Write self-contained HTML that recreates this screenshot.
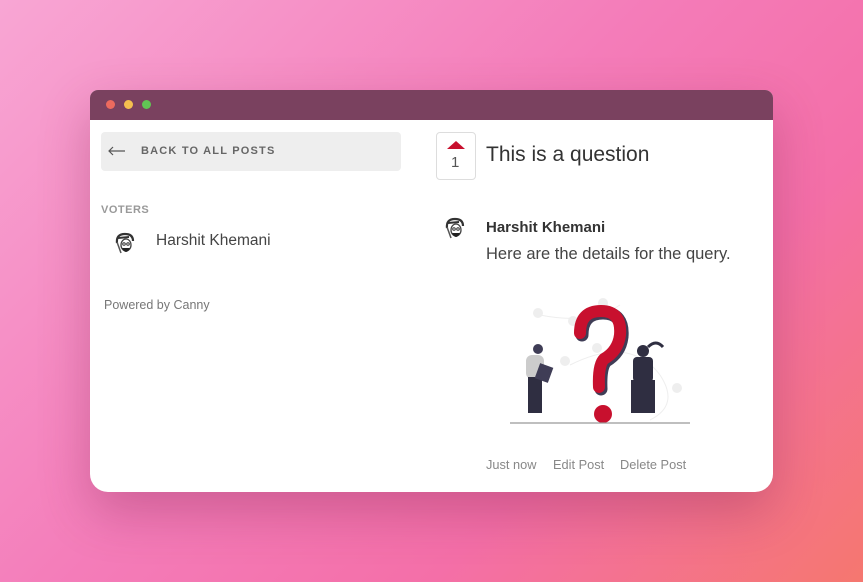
<!DOCTYPE html>
<html><head><style>
body{margin:0;width:863px;height:582px;overflow:hidden;font-family:"Liberation Sans",sans-serif;
background:linear-gradient(135deg,#f8a6d4 0%,#f47cb9 45%,#f46fa8 70%,#f5776f 100%);position:relative}
.win{position:absolute;left:90px;top:90px;width:683px;height:402px;background:#fff;border-radius:8px 8px 18px 18px;overflow:hidden;box-shadow:0 20px 50px rgba(120,30,70,.3)}
.bar{height:30px;background:#7a415f;position:relative}
.dot{position:absolute;top:10px;width:9px;height:9px;border-radius:50%}
.t{position:absolute;white-space:nowrap}
.av{position:absolute;width:22px;height:24px}
</style></head><body>
<div class="win">
<div class="bar"><div class="dot" style="left:16px;background:#ec6a5e"></div><div class="dot" style="left:34px;background:#f4bf4f"></div><div class="dot" style="left:52px;background:#61c554"></div></div>
<div style="position:absolute;left:11px;top:42px;width:300px;height:39px;background:#eee;border-radius:4px"></div>
<svg style="position:absolute;left:18px;top:56px" width="18" height="10" viewBox="0 0 18 10"><path d="M17 5 H1 M5 1 L1 5 L5 9" stroke="#555" stroke-width="1.2" fill="none"/></svg>
<div class="t" style="left:51px;top:55px;font-size:11px;font-weight:bold;letter-spacing:1.2px;color:#666">BACK TO ALL POSTS</div>
<div class="t" style="left:11px;top:114px;font-size:11px;font-weight:bold;color:#999;letter-spacing:.5px">VOTERS</div>
<svg class="av" style="left:24px;top:142px" viewBox="0 0 22 24"><path d="M3 11 Q2 2 11 2 Q19 2 19 9" stroke="#333" stroke-width="2.2" fill="none"/><path d="M4 6 L15 5" stroke="#333" stroke-width="2"/><ellipse cx="12" cy="13" rx="5" ry="6" fill="#fff" stroke="#444" stroke-width="1.3"/><circle cx="10" cy="12" r="1.3" fill="none" stroke="#333"/><circle cx="14" cy="12" r="1.3" fill="none" stroke="#333"/><path d="M8 16 Q12 24 16 16 Z" fill="#222"/><path d="M3 10 L7 21" stroke="#555" stroke-width="1.5"/></svg>
<div class="t" style="left:66px;top:142px;font-size:15.5px;color:#444">Harshit Khemani</div>
<div class="t" style="left:14px;top:208px;font-size:12.5px;color:#777">Powered by Canny</div>
<div style="position:absolute;left:346px;top:42px;width:38px;height:46px;border:1px solid #ddd;border-radius:4px"></div>
<div style="position:absolute;left:357px;top:51px;width:0;height:0;border-left:9px solid transparent;border-right:9px solid transparent;border-bottom:8px solid #c8102e"></div>
<div class="t" style="left:361px;top:64px;font-size:15px;color:#555">1</div>
<div class="t" style="left:396px;top:53px;font-size:21px;color:#333">This is a question</div>
<svg class="av" style="left:354px;top:127px" viewBox="0 0 22 24"><path d="M3 11 Q2 2 11 2 Q19 2 19 9" stroke="#333" stroke-width="2.2" fill="none"/><path d="M4 6 L15 5" stroke="#333" stroke-width="2"/><ellipse cx="12" cy="13" rx="5" ry="6" fill="#fff" stroke="#444" stroke-width="1.3"/><circle cx="10" cy="12" r="1.3" fill="none" stroke="#333"/><circle cx="14" cy="12" r="1.3" fill="none" stroke="#333"/><path d="M8 16 Q12 24 16 16 Z" fill="#222"/><path d="M3 10 L7 21" stroke="#555" stroke-width="1.5"/></svg>
<div class="t" style="left:396px;top:129px;font-size:15px;font-weight:bold;color:#333">Harshit Khemani</div>
<div class="t" style="left:396px;top:155px;font-size:16.5px;color:#444">Here are the details for the query.</div>
<svg style="position:absolute;left:420px;top:205px" width="185" height="130" viewBox="0 0 185 130">
<path d="M30 20 Q80 30 110 10 M60 70 Q120 40 150 80 Q170 110 140 125" stroke="#eee" fill="none"/>
<circle cx="28" cy="18" r="5" fill="#eee"/><circle cx="93" cy="8" r="5" fill="#eee"/><circle cx="63" cy="26" r="5" fill="#eee"/><circle cx="55" cy="66" r="5" fill="#eee"/><circle cx="87" cy="53" r="5" fill="#eee"/><circle cx="167" cy="93" r="5" fill="#eee"/>
<path d="M72 40 Q72 18 93 18 Q114 18 112 42 Q110 58 96 66 Q90 72 91 94" stroke="#3f3d56" stroke-width="13" fill="none" stroke-linecap="round"/>
<path d="M70 38 Q70 16 91 16 Q112 16 110 40 Q108 56 94 64 Q88 70 89 92" stroke="#c8102e" stroke-width="12" fill="none" stroke-linecap="round"/>
<circle cx="93" cy="119" r="9" fill="#c8102e"/>
<circle cx="28" cy="54" r="5" fill="#3f3d56"/><rect x="16" y="60" width="18" height="24" rx="6" fill="#ccc"/><rect x="18" y="82" width="14" height="36" fill="#2f2e41"/><rect x="27" y="70" width="14" height="16" fill="#3f3d56" transform="rotate(20 34 78)"/>
<circle cx="133" cy="56" r="6" fill="#2f2e41"/><path d="M138 52 Q146 44 153 52" stroke="#2f2e41" stroke-width="3" fill="none"/><rect x="123" y="62" width="20" height="25" rx="4" fill="#2f2e41"/><rect x="121" y="85" width="24" height="33" fill="#2f2e41"/>
<line x1="0" y1="128" x2="180" y2="128" stroke="#999" stroke-width="1.2"/>
</svg>
<div class="t" style="left:396px;top:367px;font-size:12.8px;color:#888">Just now</div>
<div class="t" style="left:463px;top:367px;font-size:12.8px;color:#888">Edit Post</div>
<div class="t" style="left:530px;top:367px;font-size:12.8px;color:#888">Delete Post</div>
</div>
</body></html>
